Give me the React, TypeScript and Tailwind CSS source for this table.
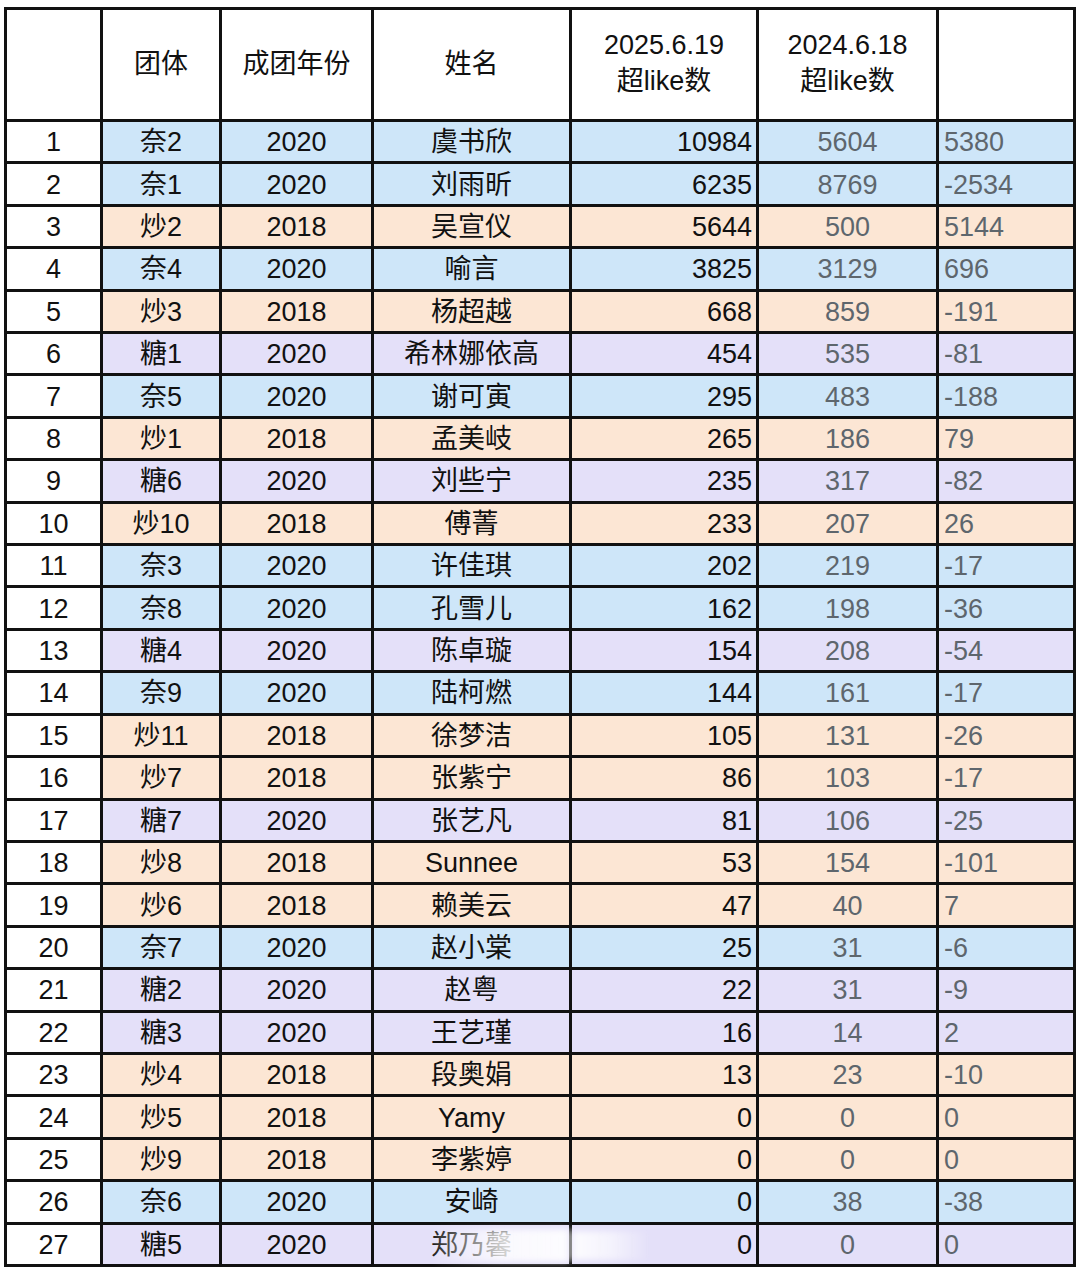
type Tone = "blue" | "peach" | "lilac";

interface Row {
  group: string;
  year: string;
  name: string;
  now: number;
  prev: number;
  diff: number;
  tone: Tone;
}

const ROWS: Row[] = [
  { group: "奈2", year: "2020", name: "虞书欣", now: 10984, prev: 5604, diff: 5380, tone: "blue" },
  { group: "奈1", year: "2020", name: "刘雨昕", now: 6235, prev: 8769, diff: -2534, tone: "blue" },
  { group: "炒2", year: "2018", name: "吴宣仪", now: 5644, prev: 500, diff: 5144, tone: "peach" },
  { group: "奈4", year: "2020", name: "喻言", now: 3825, prev: 3129, diff: 696, tone: "blue" },
  { group: "炒3", year: "2018", name: "杨超越", now: 668, prev: 859, diff: -191, tone: "peach" },
  { group: "糖1", year: "2020", name: "希林娜依高", now: 454, prev: 535, diff: -81, tone: "lilac" },
  { group: "奈5", year: "2020", name: "谢可寅", now: 295, prev: 483, diff: -188, tone: "blue" },
  { group: "炒1", year: "2018", name: "孟美岐", now: 265, prev: 186, diff: 79, tone: "peach" },
  { group: "糖6", year: "2020", name: "刘些宁", now: 235, prev: 317, diff: -82, tone: "lilac" },
  { group: "炒10", year: "2018", name: "傅菁", now: 233, prev: 207, diff: 26, tone: "peach" },
  { group: "奈3", year: "2020", name: "许佳琪", now: 202, prev: 219, diff: -17, tone: "blue" },
  { group: "奈8", year: "2020", name: "孔雪儿", now: 162, prev: 198, diff: -36, tone: "blue" },
  { group: "糖4", year: "2020", name: "陈卓璇", now: 154, prev: 208, diff: -54, tone: "lilac" },
  { group: "奈9", year: "2020", name: "陆柯燃", now: 144, prev: 161, diff: -17, tone: "blue" },
  { group: "炒11", year: "2018", name: "徐梦洁", now: 105, prev: 131, diff: -26, tone: "peach" },
  { group: "炒7", year: "2018", name: "张紫宁", now: 86, prev: 103, diff: -17, tone: "peach" },
  { group: "糖7", year: "2020", name: "张艺凡", now: 81, prev: 106, diff: -25, tone: "lilac" },
  { group: "炒8", year: "2018", name: "Sunnee", now: 53, prev: 154, diff: -101, tone: "peach" },
  { group: "炒6", year: "2018", name: "赖美云", now: 47, prev: 40, diff: 7, tone: "peach" },
  { group: "奈7", year: "2020", name: "赵小棠", now: 25, prev: 31, diff: -6, tone: "blue" },
  { group: "糖2", year: "2020", name: "赵粤", now: 22, prev: 31, diff: -9, tone: "lilac" },
  { group: "糖3", year: "2020", name: "王艺瑾", now: 16, prev: 14, diff: 2, tone: "lilac" },
  { group: "炒4", year: "2018", name: "段奥娟", now: 13, prev: 23, diff: -10, tone: "peach" },
  { group: "炒5", year: "2018", name: "Yamy", now: 0, prev: 0, diff: 0, tone: "peach" },
  { group: "炒9", year: "2018", name: "李紫婷", now: 0, prev: 0, diff: 0, tone: "peach" },
  { group: "奈6", year: "2020", name: "安崎", now: 0, prev: 38, diff: -38, tone: "blue" },
  { group: "糖5", year: "2020", name: "郑乃馨", now: 0, prev: 0, diff: 0, tone: "lilac" },
];

const TONE_BG: Record<Tone, string> = {
  blue: "bg-[#cee6f9]",
  peach: "bg-[#fce6d4]",
  lilac: "bg-[#e4e0f9]",
};

const cell = "flex items-center leading-none";

export default function App() {
  return (
    <div
      className="min-h-[1267px] bg-white pl-[4px] pt-[7px] text-[27px] text-[#111]"
      style={{ fontFamily: '"Liberation Sans", Arial, "Noto Sans CJK SC", sans-serif' }}
    >
      <div className="grid h-[1260px] w-[1072px] grid-cols-[93px_116px_149px_195px_184px_177px_134px] grid-rows-[109px_repeat(27,minmax(0,1fr))] gap-[3px] bg-[#111] p-[3px]">
        {/* header */}
        <div className="bg-white" />
        <div className={`${cell} justify-center bg-white`}>团体</div>
        <div className={`${cell} justify-center bg-white`}>成团年份</div>
        <div className={`${cell} justify-center bg-white`}>姓名</div>
        <div className="flex flex-col items-center justify-center gap-[9px] bg-white pb-[2px] leading-none">
          <span>2025.6.19</span>
          <span>超like数</span>
        </div>
        <div className="flex flex-col items-center justify-center gap-[9px] bg-white pb-[2px] leading-none">
          <span>2024.6.18</span>
          <span>超like数</span>
        </div>
        <div className="bg-white" />

        {ROWS.map((r, i) => {
          const bg = TONE_BG[r.tone];
          const last = i === ROWS.length - 1;
          return [
            <div key={`${i}-rank`} className={`${cell} justify-center bg-white pt-[2px]`}>
              {i + 1}
            </div>,
            <div key={`${i}-group`} className={`${cell} justify-center pt-[2px] ${bg}`}>
              {r.group}
            </div>,
            <div key={`${i}-year`} className={`${cell} justify-center pt-[2px] ${bg}`}>
              {r.year}
            </div>,
            <div key={`${i}-name`} className={`${cell} relative justify-center pt-[2px] ${bg}`}>
              {r.name}
              {last ? (
                <div className="absolute top-[4px] right-0 bottom-[2px] left-[60px] bg-gradient-to-r from-white/10 via-white/80 to-white/90 blur-[3px]" />
              ) : null}
            </div>,
            <div key={`${i}-now`} className={`${cell} relative justify-end pt-[2px] pr-[4px] ${bg}`}>
              {r.now}
              {last ? (
                <div className="absolute top-[6px] bottom-[4px] left-0 w-[78px] bg-gradient-to-r from-white/90 via-white/60 to-white/0 blur-[3px]" />
              ) : null}
            </div>,
            <div key={`${i}-prev`} className={`${cell} justify-center pt-[2px] text-[#5e666d] ${bg}`}>
              {r.prev}
            </div>,
            <div key={`${i}-diff`} className={`${cell} justify-start pt-[2px] pl-[5px] text-[#5e666d] ${bg}`}>
              {r.diff}
            </div>,
          ];
        })}
      </div>
    </div>
  );
}
